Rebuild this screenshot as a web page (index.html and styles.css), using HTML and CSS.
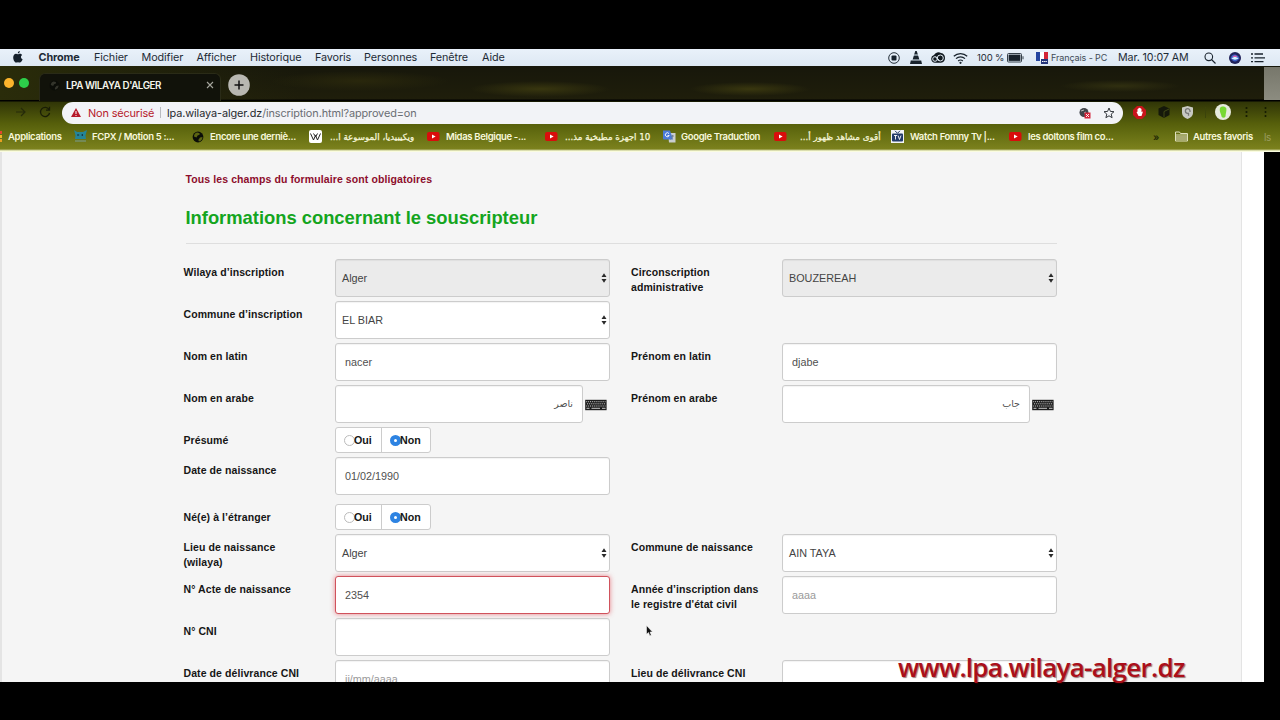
FILE: index.html
```html
<!DOCTYPE html>
<html lang="fr">
<head>
<meta charset="utf-8">
<title>LPA WILAYA D'ALGER</title>
<link rel="stylesheet" href="styles.css">
</head>
<body>
<svg class="defs" width="0" height="0">
  <symbol id="yt" viewBox="0 0 13 10"><rect y=".5" width="12.5" height="9" rx="2" fill="#d90d0c"/><path d="M5 3l3.6 2L5 7z" fill="#fff"/></symbol>
  <symbol id="globe" viewBox="0 0 12 12"><circle cx="6" cy="6" r="5.400" fill="#0b0d08"/><path d="M5 1.5c2 0 3.500 1 2.500 2.200L5.600 4.600 4.500 6.500 2 5.500C2 3.500 3 2 5 1.500zM8 6.500l2.500-.5C10.500 8.500 9 10 7 10.500L6.300 9z" fill="currentColor"/></symbol>
  <symbol id="kbd" viewBox="0 0 22 12"><rect x=".2" y=".8" width="21.400" height="10.400" fill="#1d1d1d"/><path d="M1.200 2.700h19.500M1.200 7h19.500" stroke="#ddd" stroke-width=".9" stroke-dasharray="1 .9"/><path d="M2 4.800h18.500" stroke="#ddd" stroke-width=".9" stroke-dasharray="1 .9"/><path d="M1.500 9.300h3M6.500 9.300h8.500M17 9.300h3.500" stroke="#ddd" stroke-width=".9"/></symbol>
  <symbol id="updown" viewBox="0 0 6 10"><path d="M3 .3l2.500 3.700H.5zM3 9.700L.5 6h5z" fill="#2a2a2a"/></symbol>
</svg>

<header class="menubar">
  <nav class="menus">
    <svg class="apple" viewBox="0 0 10 12"><path d="M6.800 0C6.900 1.400 5.900 2.500 4.800 2.500 4.700 1.200 5.700.2 6.800 0zM4.900 3.200c.6 0 1.100-.5 2-.5.9 0 1.700.5 2.200 1.200C7.300 5 7.600 7.400 9.600 8.200 9 9.900 8 11.600 6.800 11.600c-.7 0-1-.4-1.800-.4s-1.100.4-1.800.4C1.700 11.600.2 8.900.2 6.500.2 4.200 1.600 2.800 3 2.800c.8 0 1.400.4 1.900.4z" fill="#15202b"/></svg>
    <b>Chrome</b><span>Fichier</span><span>Modifier</span><span>Afficher</span><span>Historique</span><span>Favoris</span><span>Personnes</span><span>Fenêtre</span><span>Aide</span>
  </nav>
  <div class="status">
    <svg viewBox="0 0 12 12" width="12" height="12"><circle cx="6" cy="6" r="5.300" fill="none" stroke="#25303a"/><rect x="3.500" y="3.500" width="5" height="5" rx="1" fill="#15202b"/></svg>
    <svg viewBox="0 0 12 13" width="12" height="13"><path d="M5.300 0h1.400l1 3H4.300zM3.700 5h4.600l.9 3H2.800zM.8 9.500h10.400L12 13H0z" fill="#18222c"/><path d="M4.300 3h3.400l.6 2H3.700zM2.800 8h6.400l.4 1.500H2.400z" fill="#7d8a94"/></svg>
    <svg viewBox="0 0 16 12" width="16" height="12"><path d="M5 10.800A4 4 0 0 1 4 3a5 5 0 0 1 7-2 5 5 0 0 1 0 9.800z" fill="#10181f"/><circle cx="5" cy="7" r="2.300" fill="none" stroke="#dfe9f2"/><circle cx="10.300" cy="6" r="3" fill="none" stroke="#dfe9f2"/><path d="M5.500 5l4 3.500" stroke="#dfe9f2"/></svg>
    <svg viewBox="0 0 15 12" width="15" height="12" fill="none" stroke="#18222c" stroke-width="1.200"><path d="M.8 4.300a9.500 9.500 0 0 1 13.400 0M3 6.700a6.300 6.300 0 0 1 9 0M5.200 9a3.200 3.200 0 0 1 4.600 0"/><circle cx="7.500" cy="10.800" r=".5"/></svg>
    <span class="pct">100 %</span>
    <svg viewBox="0 0 17 10" width="17" height="10"><rect x=".5" y=".5" width="14" height="8.500" rx="1" fill="none" stroke="#35404a"/><rect x="1.600" y="1.600" width="11.800" height="6.300" fill="#18222c"/><path d="M15.500 3.200h1v3h-1z" fill="#35404a"/></svg>
    <svg viewBox="0 0 12 12" width="12" height="12"><path d="M0 0h4v9H0z" fill="#2445a0"/><path d="M4 0h4v9H4z" fill="#fff"/><path d="M8 0h4v9H8z" fill="#d32436"/><path d="M5 7h7v5H5z" fill="#24357b"/><path d="M6 9.500h5" stroke="#fff" stroke-dasharray="1.500 .6"/></svg>
    <span class="lang">Français - PC</span>
    <span class="clock">Mar. 10:07 AM</span>
    <svg viewBox="0 0 12 12" width="12" height="12" fill="none" stroke="#18222c" stroke-width="1.100"><circle cx="4.800" cy="4.800" r="3.800"/><path d="M7.500 7.500l4 4"/></svg>
    <svg viewBox="0 0 12 12" width="12" height="12"><circle cx="6" cy="6" r="6" fill="#20225a"/><path d="M1.500 6.500c1-4 3-4 4.500-4s3.500 1 4.500 4C9 8 8 9.500 6 9.500S3 8 1.500 6.500z" fill="#3d5fc4"/><path d="M3.500 5c1-2 4-2 5 0z" fill="#e05fb0"/><path d="M2.500 6.500c2-2 5-2 7 0-2 1.500-5 1.500-7 0z" fill="#d5f2ff"/></svg>
    <svg viewBox="0 0 14 10" width="14" height="10" stroke="#18222c" stroke-width="1.300"><path d="M0 1h2M0 4.800h2M0 8.600h2M3.500 1H12M3.500 4.800H14M3.500 8.600H12.500"/></svg>
  </div>
</header>

<section class="chrome">
  <div class="tabstrip">
    <i class="dot amber"></i><i class="dot green"></i>
    <div class="tab">
      <svg class="fav" viewBox="0 0 12 12"><use href="#globe"/></svg>
      <span>LPA WILAYA D'ALGER</span>
      <svg class="close" viewBox="0 0 8 8"><path d="M1 1l6 6M7 1L1 7" stroke="#a5a59d" stroke-width="1.100"/></svg>
    </div>
    <svg class="plus" viewBox="0 0 22 22"><circle cx="11" cy="11" r="10.800" fill="#b8b7b1"/><path d="M11 6.500v9M6.500 11h9" stroke="#111" stroke-width="1.500"/></svg>
  </div>
  <div class="toolbar">
    <svg class="fwd" viewBox="0 0 10 10"><path d="M0 5h9M5 1l4 4-4 4" fill="none" stroke="#262b0a" stroke-width="1.200"/></svg>
    <svg class="reload" viewBox="0 0 12 12"><path d="M10 3.500A4.600 4.600 0 1 0 10.600 7M10.500.8v3.400H7" fill="none" stroke="#191d06" stroke-width="1.300"/></svg>
    <div class="omnibox">
      <svg class="warn" viewBox="0 0 10 9"><path d="M5 0l5 9H0z" fill="#b6192b"/><path d="M5 3v3M5 7v1" stroke="#fff"/></svg>
      <span class="insecure">Non sécurisé</span><i class="sep"></i>
      <span class="url"><em>lpa.wilaya-alger.dz</em>/inscription.html?approved=on</span>
      <svg class="cookie" viewBox="0 0 12 12"><circle cx="5" cy="5.500" r="4.500" fill="#41454b"/><path d="M2 4l3-1M5 6l2-1" stroke="#bbb"/><rect x="5.500" y="5.500" width="6" height="6" fill="#d3263d"/><path d="M7 7l3 3m0-3l-3 3" stroke="#fff" stroke-width=".9"/></svg>
      <svg class="star" viewBox="0 0 12 12"><path d="M6 1l1.400 3.400 3.600.3-2.800 2.400.9 3.600L6 8.800l-3.100 1.900.9-3.600L1 4.700l3.600-.3z" fill="none" stroke="#33373d" stroke-width="1"/></svg>
    </div>
    <div class="exts">
      <svg viewBox="0 0 13 13" width="13" height="13"><path d="M4 0h5l4 4v5l-4 4H4L0 9V4z" fill="#c9141b"/><path d="M3.500 6l1-.3V3l1-.2V2l1-.2 1 .5L8.500 3v3l1.500-.5L8.500 10h-3z" fill="#fff"/></svg>
      <svg viewBox="0 0 12 12" width="12" height="12"><path d="M6 0l5.500 2.500v6.500L6 12 .5 9V2.500z" fill="#15180a"/><path d="M6 5.500l5-2.500M6 5.500V11.500" stroke="#4b5418" stroke-width=".8"/></svg>
      <svg viewBox="0 0 11 13" width="11" height="13"><path d="M0 1.500L5.500 0 11 1.500V7c0 3-2.500 5-5.500 6C2.500 12 0 10 0 7z" fill="#c8c9c3"/><path d="M8 6V5a2.300 2.300 0 1 0-2.300 2.300h.8v2.400" fill="none" stroke="#777" stroke-width="1.300"/></svg>
      <i class="vsep"></i>
      <svg viewBox="0 0 16 16" width="16" height="16"><circle cx="8" cy="8" r="8" fill="#e6eadc"/><path d="M5 4c1.500-2 5-2 6.300.3.5 3-.7 5-.8 8.200-1 1.700-3 1.700-4 0C6.500 10 4 8 5 4z" fill="#77d832"/></svg>
      <svg viewBox="0 0 3 12" width="3" height="12" fill="#141903"><circle cx="1.500" cy="2" r="1.100"/><circle cx="1.500" cy="6" r="1.100"/><circle cx="1.500" cy="10" r="1.100"/></svg>
      <svg viewBox="0 0 3 12" width="3" height="12" fill="#141903"><circle cx="1.500" cy="2" r="1"/><circle cx="1.500" cy="6" r="1"/><circle cx="1.500" cy="10" r="1"/></svg>
    </div>
  </div>
  <div class="bookmarks">
    <svg class="apps-icon" viewBox="0 0 13 13"><path d="M0 1h2v3H0z" fill="#e0452f"/><path d="M0 5h2v3H0z" fill="#f0b429"/><path d="M0 9h2v3H0z" fill="#e8a020"/></svg><span class="t apps">Applications</span>
    <svg viewBox="0 0 13 13"><path d="M0 0l3 2h6l4-2-1.500 5.500L12 9H1l.5-3.500z" fill="#258597"/><path d="M3.500 4l2 1-2 1zM9 4L7 5l2 1z" fill="#123"/><path d="M1 11h11" stroke="#76906b" stroke-width="1.500"/></svg><span class="t fcpx">FCPX / Motion 5 :...</span>
    <svg class="gl" viewBox="0 0 12 12"><use href="#globe"/></svg><span class="t encore">Encore une derniè...</span>
    <svg viewBox="0 0 13 13"><rect width="13" height="13" rx="2" fill="#fff"/><path d="M1.500 3.500l3 6.500 2-4.500 2 4.500L11.500 3.500M4.500 3.500l2 3M8.500 3.500L6.500 7" fill="none" stroke="#222" stroke-width="1"/></svg><span class="t ar wiki" dir="rtl">ويكيبيديا، الموسوعة ا...</span>
    <svg viewBox="0 0 13 10"><use href="#yt"/></svg><span class="t midas">Midas Belgique -...</span>
    <svg viewBox="0 0 13 10"><use href="#yt"/></svg><span class="t ar kitchen" dir="rtl">10 اجهزة مطبخية مذ...</span>
    <svg viewBox="0 0 13 13"><path d="M5 3h7.500v9.500H6z" fill="#c9cdd0"/><path d="M0 .5h7l3 9H1Q0 9.500 0 8.500z" fill="#4a7bd8"/><path d="M6 3.700A2 2 0 1 0 6.200 5.500H4.500" fill="none" stroke="#fff" stroke-width=".9"/><path d="M8 6h3M9.500 5v1c0 2-1 3-2 3.500" stroke="#687889" fill="none" stroke-width=".8"/></svg><span class="t gt">Google Traduction</span>
    <svg viewBox="0 0 13 10"><use href="#yt"/></svg><span class="t ar akwa" dir="rtl">أقوى مشاهد ظهور أ...</span>
    <svg viewBox="0 0 13 13"><rect width="13" height="13" fill="#f2f4f6"/><path d="M4 .8l2.500 2.500L9 .8" stroke="#223a68" fill="none"/><rect x="1" y="3.500" width="11" height="8" rx="1" fill="#223a68"/><path d="M3 5.500h3M4.500 5.500v4M7 5.500l1.500 4 1.500-4" stroke="#fff" fill="none" stroke-width=".9"/></svg><span class="t fomny">Watch Fomny Tv |...</span>
    <svg viewBox="0 0 13 10"><use href="#yt"/></svg><span class="t doltons">les doltons film co...</span>
    <span class="more">»</span>
    <svg viewBox="0 0 13 11"><path d="M.5 10V1h4l1 1.500h7V10zM.5 4h12" fill="none" stroke="#dfe0bd"/><path d="M1 5h11v4.500H1z" fill="#a8aa72"/></svg><span class="t autres">Autres favoris</span>
    <span class="ghost">ls</span>
  </div>
  <div class="behind"></div>
</section>

<main class="page">
  <div class="sheet">
    <p class="notice">Tous les champs du formulaire sont obligatoires</p>
    <h1>Informations concernant le souscripteur</h1>
    <form class="form">
      <div class="row">
        <label>Wilaya d’inscription</label>
        <div class="field select off">Alger<svg viewBox="0 0 6 10"><use href="#updown"/></svg></div>
        <label>Circonscription<br>administrative</label>
        <div class="field select off caps">BOUZEREAH<svg viewBox="0 0 6 10"><use href="#updown"/></svg></div>
      </div>
      <div class="row">
        <label>Commune d’inscription</label>
        <div class="field select caps">EL BIAR<svg viewBox="0 0 6 10"><use href="#updown"/></svg></div>
      </div>
      <div class="row">
        <label>Nom en latin</label><div class="field">nacer</div>
        <label>Prénom en latin</label><div class="field">djabe</div>
      </div>
      <div class="row">
        <label>Nom en arabe</label>
        <div class="with-kbd"><div class="field arabic" dir="rtl">ناصر</div><svg viewBox="0 0 22 12"><use href="#kbd"/></svg></div>
        <label>Prénom en arabe</label>
        <div class="with-kbd"><div class="field arabic" dir="rtl">جاب</div><svg viewBox="0 0 22 12"><use href="#kbd"/></svg></div>
      </div>
      <div class="row short">
        <label>Présumé</label>
        <div class="radios"><span><i></i>Oui</span><span><i class="on"></i>Non</span></div>
      </div>
      <div class="row dob">
        <label>Date de naissance</label><div class="field">01/02/1990</div>
      </div>
      <div class="row short">
        <label>Né(e) à l’étranger</label>
        <div class="radios"><span><i></i>Oui</span><span><i class="on"></i>Non</span></div>
      </div>
      <div class="row">
        <label>Lieu de naissance<br>(wilaya)</label>
        <div class="field select">Alger<svg viewBox="0 0 6 10"><use href="#updown"/></svg></div>
        <label>Commune de naissance</label>
        <div class="field select caps">AIN TAYA<svg viewBox="0 0 6 10"><use href="#updown"/></svg></div>
      </div>
      <div class="row">
        <label>N° Acte de naissance</label><div class="field error">2354</div>
        <label>Année d’inscription dans<br>le registre d'état civil</label><div class="field hint">aaaa</div>
      </div>
      <div class="row">
        <label>N° CNI</label><div class="field"></div>
      </div>
      <div class="row">
        <label>Date de délivrance CNI</label><div class="field hint">jj/mm/aaaa</div>
        <label>Lieu de délivrance CNI</label><div class="field"></div>
      </div>
    </form>
  </div>
</main>
<svg class="cursor" viewBox="0 0 7 12"><path d="M.5.5v8.700l2-1.700 1.300 3.300 1.500-.6-1.300-3.200h2.500z" fill="#111" stroke="#fff" stroke-width=".5"/></svg>
<div class="watermark">www.lpa.wilaya-alger.dz</div>
</body>
</html>
```
FILE: styles.css
```css
* { box-sizing: border-box; }
body {
  margin: 0; width: 1280px; height: 720px; overflow: hidden; position: relative;
  background: #000; padding-top: 49px;
  font-family: "Liberation Sans", Arial, sans-serif;
}
svg { display: block; flex: none; }
.defs { position: absolute; }

/* macOS menu bar */
.menubar {
  height: 17px; background: linear-gradient(#e9f1fa, #dde8f3); display: flex; justify-content: space-between;
  font-family: Inter, "Liberation Sans", sans-serif; font-size: 10.800px; letter-spacing: -.1px; line-height: 15px; color: #1d2a35; white-space: nowrap;
}
.menus { display: grid; padding-left: 13px; align-items: center; grid-template-columns: 25.500px 55.500px 47.500px 55px 53.500px 65px 49px 66px 52px 30px; }
.menus b { letter-spacing: -.1px; }
.apple { width: 10px; height: 12px; margin-top: -1px; }
.status { display: grid; width: 392px; align-items: center; grid-template-columns: 22px 20px 23px 24px 30px 29px 15px 67px 86px 25px 22px 29px; }
.pct { font-size: 9.500px; }
.lang { font-size: 9px; color: #3f4b56; letter-spacing: -.1px; }
.clock { font-size: 10.700px; }

/* Browser window */
.chrome {
  height: 86px; position: relative; font-family: Inter, "Liberation Sans", sans-serif;
  background: linear-gradient(#17170b 0, #1f1e0b 33px, #000 34px, #000 35px, #303507 36px, #555e0b 57px, #656e12 68px, #7b811d 83px, #fafce0 85px);
}
.tabstrip { height: 35px; display: flex; align-items: flex-start; background: radial-gradient(ellipse 60px 7px at 750px 23px, #39370f, transparent), radial-gradient(ellipse 70px 8px at 540px 23px, #38360f, transparent), radial-gradient(ellipse 60px 6px at 1120px 20px, #302f10, transparent), radial-gradient(ellipse 90px 10px at 360px 15px, #29270c, transparent), linear-gradient(90deg, #2a2c0a, transparent 300px); background-size: 1264px 34px; background-repeat: no-repeat; }
.dot { width: 10px; height: 10px; border-radius: 50%; margin-top: 12px; }
.amber { background: #fcb42c; margin-left: 4px; }
.green { background: #2dcf4a; margin-left: 5px; }
.tab { width: 182px; height: 28px; margin: 7px 0 0 10px; border-radius: 6px 6px 0 0; background: #11120a; display: flex; align-items: center; padding: 0 8px 5px 9px; border: 1px solid #2a2b17; border-bottom: 0; font-size: 9.800px; font-weight: 600; letter-spacing: -.42px; color: #f5f5ec; white-space: nowrap; }
.fav { width: 11px; height: 11px; margin-right: 6px; color: #33342b; }
.close { width: 8px; height: 8px; margin-left: auto; margin-right: -2px; }
.plus { width: 22px; height: 22px; margin: 8px 0 0 7px; }
.toolbar { height: 22px; display: flex; align-items: center; padding-left: 16px; }
.fwd { width: 10px; height: 10px; }
.reload { width: 12px; height: 12px; margin: 0 11px 0 13px; }
.omnibox { width: 1061px; height: 22px; border-radius: 11px; background: #f2f3f7; display: flex; align-items: center; padding: 0 8px 0 9px; font-size: 10.900px; letter-spacing: -.1px; white-space: nowrap; margin-top: 1px; line-height: 20px; }
.warn { width: 10px; height: 9px; }
.insecure { color: #b6192b; width: 67px; margin-left: 7px; letter-spacing: -.15px; }
.sep { width: 1px; height: 11px; background: #b9bbc0; margin: 0 6px 0 5px; }
.url { color: #6a6e74; flex: 1; }
.url em { font-style: normal; color: #26292e; }
.cookie { width: 12px; height: 12px; margin-right: 12px; }
.star { width: 12px; height: 12px; }
.exts { display: grid; grid-template-columns: 24.500px 24px 23px 10px 30px 19px 6px; align-items: center; margin-left: 10px; }
.vsep { width: 1px; height: 11px; background: #3b430a; }
.bookmarks { height: 27px; display: grid; align-items: center; white-space: nowrap; font-size: 9.500px; letter-spacing: -.33px; font-weight: 600; color: #f8f8dc;
  grid-template-columns: 8px 66px 18px 100px 18px 99px 21px 97px 19px 99px 20px 98px 18px 93px 26px 91px 19px 99px 19px 125px 22px 18px 71px 10px; }
.bookmarks svg { width: 13px; height: 13px; }
.bookmarks .gl { width: 12px; height: 12px; color: #5c6512; }
.more { color: #222806; font-size: 10px; }
.bookmarks .ar { font-family: "DejaVu Sans", sans-serif; font-size: 8.700px; font-weight: 400; letter-spacing: 0; justify-self: start; -webkit-text-stroke: .25px #f8f8dc; }
.ghost { color: #9a9c60; font-weight: 400; font-size: 10px; }
.behind { position: absolute; left: 1264px; top: 1px; width: 16px; height: 33px; background: linear-gradient(#77776b, #8c8c80); }

/* Page */
.page { width: 1264px; height: 530px; background: #fff; overflow: hidden; }
.sheet { width: 1242px; height: 530px; background: #f5f5f5; border-left: 2px solid #e4e4e4; border-right: 1px solid #e4e4e4; padding: 20px 0 0 181.500px; }
.notice { margin: 0 0 0 2px; font-size: 10.500px; line-height: 14px; font-weight: 700; color: #8d0d2c; letter-spacing: .1px; }
h1 { margin: 15px 0 0 2px; width: 871px; height: 43px; border-bottom: 1px solid #dedede; font-size: 18.400px; line-height: 34px; letter-spacing: -.02px; font-weight: 700; color: #14a51e; white-space: nowrap; }
.form { padding-top: 15px; }
.row { display: grid; grid-template-columns: 151.500px 275px 21px 151px 275px; height: 42px; align-items: start; }
.row > :nth-child(3) { grid-column: 4; }
.row > :nth-child(4) { grid-column: 5; }
.row label { font-size: 10.500px; font-weight: 700; line-height: 15.300px; color: #161616; padding-top: 5.500px; white-space: nowrap; letter-spacing: .08px; }
.short { height: 30px; }
.dob { height: 47px; }
.field { height: 38px; border: 1px solid #ccc; border-radius: 3px; background: #fff; color: #505050; font-size: 10.800px; line-height: 36px; padding: 0 9px; position: relative; box-shadow: inset 0 1px 1px rgba(0,0,0,.05); }
.select { padding: 0 2px 0 6px; display: flex; justify-content: space-between; align-items: center; color: #444; }
.select svg { width: 6px; height: 10px; }
.off { background: #ebebeb; }
.error { border-color: #d0525c; box-shadow: 0 0 5px rgba(225, 80, 90, .7); }
.hint { color: #999; }
.with-kbd { display: flex; align-items: center; gap: 2px; }
.arabic { width: 248px; font-family: "DejaVu Sans", sans-serif; font-size: 9.500px; }
.with-kbd svg { width: 22px; height: 12px; margin-top: 2px; }
.radios { width: 96px; height: 26px; display: flex; background: #fff; border: 1px solid #ccc; border-radius: 3px; font-size: 10.700px; font-weight: 700; color: #161616; }
.radios span { display: flex; align-items: center; padding-left: 8px; width: 45px; }
.radios span + span { border-left: 1px solid #ccc; width: 49px; }
.radios i { flex: none; width: 11px; height: 11px; border: 1px solid #bbb; border-radius: 50%; background: #fff; margin-right: -1px; }
.radios .on { border: 4px solid #2d83e2; }

.cursor { position: absolute; left: 646px; top: 625px; width: 7px; height: 12px; }
.watermark { position: absolute; left: 898px; top: 649px; font: 600 26px/36px "Comic Sans MS", "Open Sans", sans-serif; letter-spacing: -.72px; color: #ab0f1a; text-shadow: 1px 1px 1px rgba(60, 0, 0, .5); white-space: nowrap; }
```
